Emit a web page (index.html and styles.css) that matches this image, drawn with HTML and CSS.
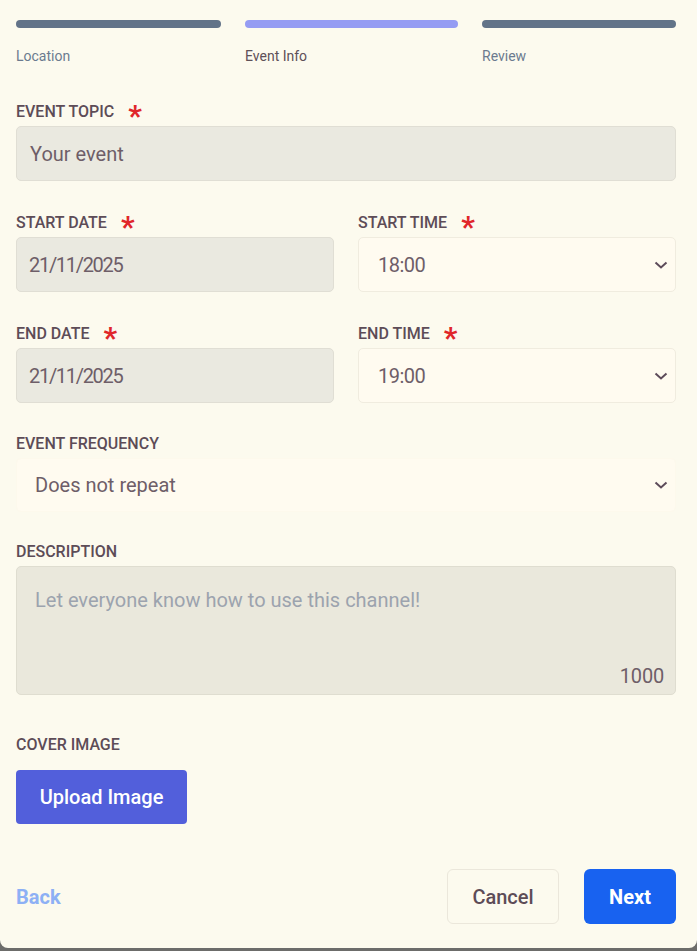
FILE: index.html
```html
<!DOCTYPE html>
<html>
<head>
<meta charset="utf-8">
<link rel="stylesheet" href="styles.css">
</head>
<body>
<div class="modal">
  <div class="steps">
    <div class="step"><div class="bar"></div><div class="step-label">Location</div></div>
    <div class="step"><div class="bar active"></div><div class="step-label current">Event Info</div></div>
    <div class="step"><div class="bar"></div><div class="step-label">Review</div></div>
  </div>

  <div class="field">
    <div class="label">EVENT TOPIC <span class="req">*</span></div>
    <div class="input disabled">Your event</div>
  </div>

  <div class="row">
    <div class="field">
      <div class="label">START DATE <span class="req">*</span></div>
      <div class="input disabled date">21/11/2025</div>
    </div>
    <div class="field">
      <div class="label">START TIME <span class="req">*</span></div>
      <div class="input select"><span class="time">18:00</span>
        <svg class="chev" width="14" height="8" viewBox="0 0 14 8"><path d="M1.5 1.5 L7 6.5 L12.5 1.5" fill="none" stroke="#5d4b5a" stroke-width="2"/></svg>
      </div>
    </div>
  </div>

  <div class="row">
    <div class="field">
      <div class="label">END DATE <span class="req">*</span></div>
      <div class="input disabled date">21/11/2025</div>
    </div>
    <div class="field">
      <div class="label">END TIME <span class="req">*</span></div>
      <div class="input select"><span class="time">19:00</span>
        <svg class="chev" width="14" height="8" viewBox="0 0 14 8"><path d="M1.5 1.5 L7 6.5 L12.5 1.5" fill="none" stroke="#5d4b5a" stroke-width="2"/></svg>
      </div>
    </div>
  </div>

  <div class="field freq-field">
    <div class="label">EVENT FREQUENCY</div>
    <div class="input select freq"><span>Does not repeat</span>
      <svg class="chev" width="14" height="8" viewBox="0 0 14 8"><path d="M1.5 1.5 L7 6.5 L12.5 1.5" fill="none" stroke="#5d4b5a" stroke-width="2"/></svg>
    </div>
  </div>

  <div class="field desc-field">
    <div class="label">DESCRIPTION</div>
    <div class="textarea">
      <div class="placeholder">Let everyone know how to use this channel!</div>
      <div class="counter">1000</div>
    </div>
  </div>

  <div class="field cover">
    <div class="label">COVER IMAGE</div>
    <div><button class="upload">Upload Image</button></div>
  </div>

  <div class="footer">
    <span class="back">Back</span>
    <div class="actions">
      <button class="cancel">Cancel</button>
      <button class="next">Next</button>
    </div>
  </div>
</div>
</body>
</html>
```
FILE: styles.css
```css
* { box-sizing: border-box; }
html, body { margin: 0; padding: 0; }
body {
  background: #6c6c6a;
  font-family: Roboto, "Noto Sans", sans-serif;
  width: 697px;
  height: 951px;
  overflow: hidden;
}
.modal {
  background: #fcfaee;
  height: 948px;
  border-radius: 0 0 8px 8px;
  padding: 20px 21px 24px 16px;
  display: flex;
  flex-direction: column;
}
.steps {
  display: grid;
  grid-template-columns: 205px 213px 194px;
  column-gap: 24px;
  margin-bottom: 34px;
}
.bar {
  height: 8px;
  border-radius: 4px;
  background: #627388;
}
.bar.active { background: #959cf3; }
.step-label {
  margin-top: 18px;
  font-size: 14px;
  line-height: 20px;
  color: #6b7a8f;
}
.step-label.current { color: #5e5058; }

.field { margin-bottom: 30px; }
.label {
  font-size: 16px;
  font-weight: 500;
  line-height: 23px;
  height: 22px;
  color: #5d4c57;
  margin-bottom: 4px;
  white-space: nowrap;
}
.req {
  color: #e0262a;
  font-size: 30px;
  line-height: 0;
  margin-left: 10px;
  font-weight: 700;
  vertical-align: -9px;
}
.input {
  height: 55px;
  border-radius: 5px;
  border: 1px solid #e0ded4;
  padding: 0 12px;
  display: flex;
  align-items: center;
  font-size: 20px;
  color: #6e5e68;
}
.input.disabled { background: #eae9e0; padding-left: 13px; }
.input.date { padding-left: 12px; letter-spacing: -1.3px; }
.time { letter-spacing: -0.5px; }
.input.select {
  background: #fffbf0;
  border-color: #f0ecdf;
  justify-content: space-between;
  padding: 0 7px 0 19px;
}
.freq-field { margin-top: -1px; }
.input.freq { border-color: #fdf9ec; padding-left: 18px; height: 54px; }
.row {
  display: grid;
  grid-template-columns: 1fr 1fr;
  column-gap: 24px;
}
.textarea {
  height: 129px;
  background: #eae8dc;
  border: 1px solid #dfddd0;
  border-radius: 5px;
  padding: 16px 11px 4px 18px;
  display: flex;
  flex-direction: column;
  justify-content: space-between;
  font-size: 20px;
}
.placeholder { color: #9ca3ae; line-height: 36px; margin-top: -1px; }
.counter { align-self: flex-end; color: #6e5e68; line-height: 24px; letter-spacing: -0.2px; margin-bottom: 2px; }
.desc-field { margin-top: -2px; margin-bottom: 38px; }
.cover .label { margin-bottom: 15px; }
.cover { margin-bottom: 45px; }
button {
  font-family: inherit;
  border: none;
  cursor: pointer;
}
.upload {
  background: #525fdb;
  color: #fff;
  font-size: 20px;
  font-weight: 500;
  height: 54px;
  width: 171px;
  border-radius: 4px;
}
.footer {
  display: flex;
  justify-content: space-between;
  align-items: center;
}
.back {
  color: #8db0f5;
  font-weight: 700;
  font-size: 20px;
}
.actions { display: flex; gap: 25px; }
.cancel {
  background: #fcfaee;
  border: 1px solid #ebe7db;
  color: #5d4c57;
  font-size: 20px;
  font-weight: 500;
  height: 55px;
  width: 112px;
  border-radius: 6px;
}
.next {
  background: #1862f0;
  color: #fff;
  font-size: 20px;
  font-weight: 700;
  height: 55px;
  width: 92px;
  border-radius: 6px;
}
```
